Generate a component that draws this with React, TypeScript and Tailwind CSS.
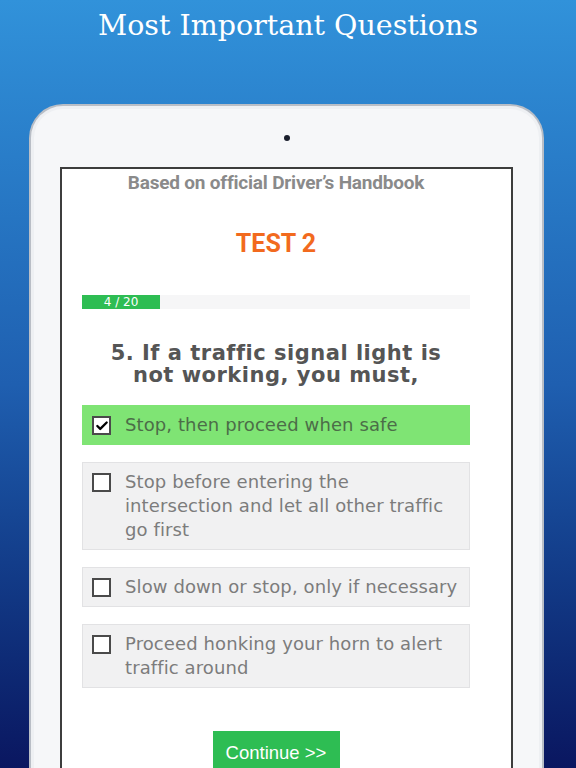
import { Check } from 'lucide-react'

const options = [
    { lines: ['Stop, then proceed when safe'], checked: true },
    { lines: ['Stop before entering the', 'intersection and let all other traffic', 'go first'], checked: false },
    { lines: ['Slow down or stop, only if necessary'], checked: false },
    { lines: ['Proceed honking your horn to alert', 'traffic around'], checked: false },
]

function Option({ lines, checked }: { lines: string[]; checked: boolean }) {
    return (
        <div
            className={`flex items-start gap-[14px] pl-[9px] pr-[2px] py-[7px] border ${checked ? 'bg-[#7fe474] border-[#7fe474] text-[#4c6d48]' : 'bg-[#f1f1f2] border-[#e2e2e4] text-[#7c7c7c]'}`}
        >
            <div className="mt-[3px] w-[19px] h-[19px] shrink-0 border-2 border-[#4a4a4a] bg-white flex items-center justify-center">
                {checked && <Check size={14} strokeWidth={4} className="text-black" />}
            </div>
            <p className="text-[18px] leading-[24px] tracking-[0.1px]">
                {lines.map((l, i) => (
                    <span key={i}>
                        {i > 0 && <br />}
                        {l}
                    </span>
                ))}
            </p>
        </div>
    )
}

export default function App() {
    return (
        <div className="w-[576px] h-[768px] overflow-hidden bg-gradient-to-b from-[#3192da] via-[#1f5fb0] to-[#0a1660] flex flex-col items-center">
            {/* Title */}
            <h1 className="mt-[6px] text-white text-[28.5px] leading-[40px]" style={{ fontFamily: '"DejaVu Serif", serif' }}>
                Most Important Questions
            </h1>

            {/* Tablet */}
            <div className="mt-[58px] self-start ml-[29px] w-[515px] flex-1 rounded-t-[34px] border-t-2 border-x-2 border-[#b9bec6] bg-[#f6f7f9] flex flex-col shadow-[inset_0_0_0_3px_#eef0f3]">
                <div className="mt-[29px] self-center w-[6px] h-[6px] rounded-full bg-[#1a1e2c]" />
                <div
                    className="mt-[26px] ml-[29px] w-[453px] flex-1 bg-white border-t-2 border-x-2 border-[#3d3d3d]"
                    style={{ fontFamily: 'Roboto, "Liberation Sans", sans-serif' }}
                >
                    <div className="ml-[20px] w-[388px] flex flex-col">
                        <p className="text-center text-[19px] font-bold text-[#8a8a8a] tracking-[-0.2px] leading-[26px] mt-[1px]">
                            Based on official Driver’s Handbook
                        </p>
                        <p className="text-center text-[25px] font-bold text-[#f26a1e] mt-[33px] leading-[30px]">TEST 2</p>

                        {/* Progress */}
                        <div className="mt-[36px] h-[14px] bg-[#f6f6f7] flex">
                            <div className="w-[78px] h-full bg-[#2ebd53] flex items-center justify-center text-white text-[12px] leading-none" style={{ fontFamily: '"DejaVu Sans", sans-serif' }}>
                                4 / 20
                            </div>
                        </div>

                        <h2
                            className="mt-[33px] text-center text-[#555] text-[21px] leading-[22px] tracking-[0.5px] font-bold px-[16px]"
                            style={{ fontFamily: '"DejaVu Sans", sans-serif' }}
                        >
                            5. If a traffic signal light is not working, you must,
                        </h2>

                        <div className="mt-[19px] flex flex-col gap-[17px]" style={{ fontFamily: '"DejaVu Sans", sans-serif' }}>
                            {options.map((o, i) => (
                                <Option key={i} lines={o.lines} checked={o.checked} />
                            ))}
                        </div>

                        <div className="mt-[43px] flex justify-center">
                            <button className="w-[127px] h-[44px] bg-[#2ebd53] text-white text-[18.5px] pb-[1px]" style={{ fontFamily: '"Liberation Sans", Arial, sans-serif' }}>
                                Continue &gt;&gt;
                            </button>
                        </div>
                    </div>
                </div>
            </div>
        </div>
    )
}
